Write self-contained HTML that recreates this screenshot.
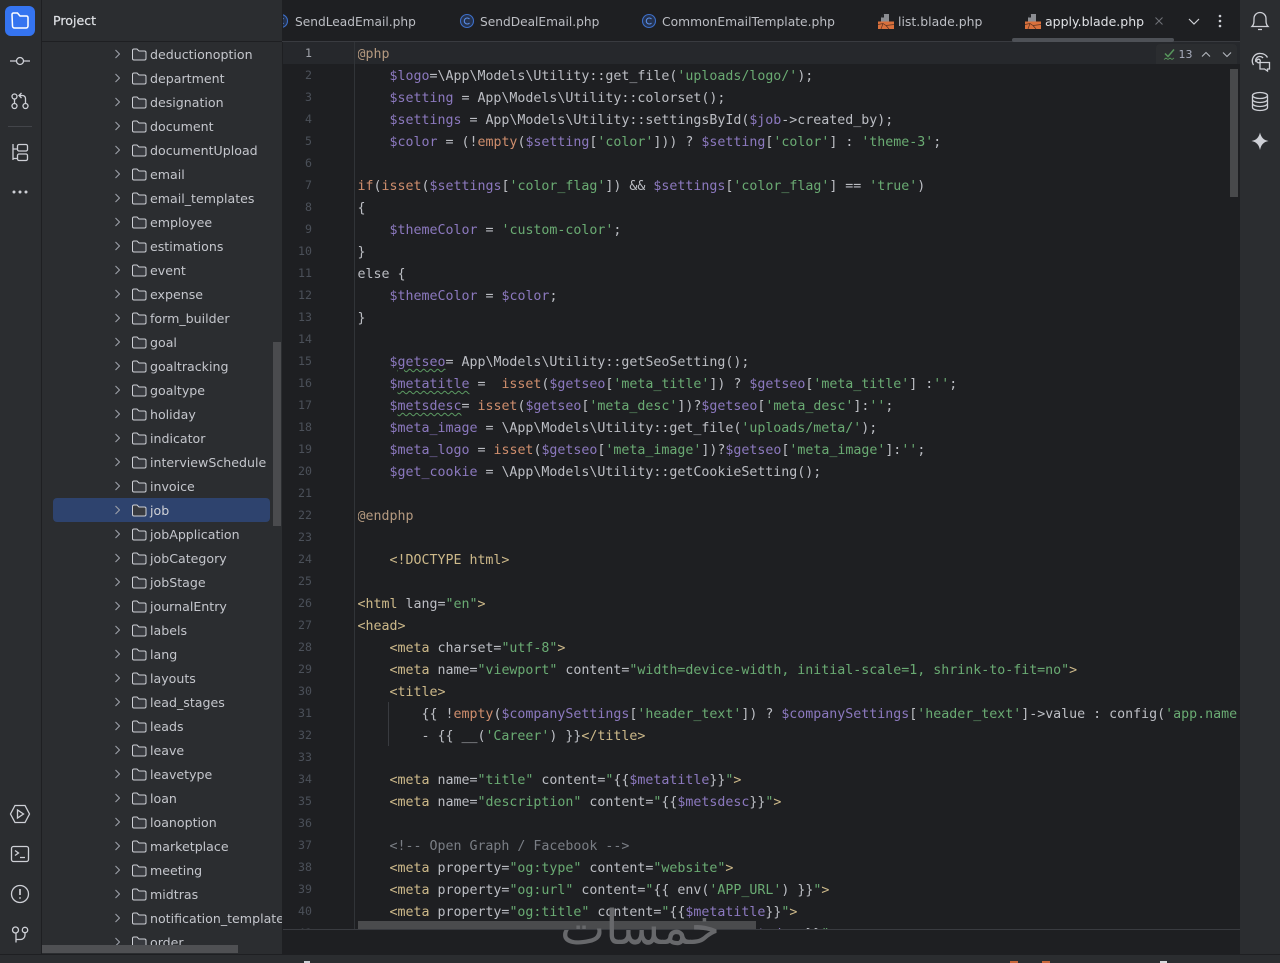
<!DOCTYPE html>
<html lang="en"><head><meta charset="utf-8"><title>apply.blade.php</title>
<style>
html,body{margin:0;padding:0;width:1280px;height:963px;overflow:hidden;background:#1e1f22}
*{box-sizing:border-box}
.a{position:absolute}
#rows{left:42px;top:42px;width:240px;height:912px;overflow:hidden;font:12.6px/26px "DejaVu Sans",sans-serif;color:#c4c6cc}
.r{height:24px;padding-left:108px;position:relative;white-space:nowrap}
.r svg{position:absolute;left:70px;top:0}
.sel{background:#2e436e;border-radius:4px;margin:0 12px 0 11px;padding-left:97px;color:#cfd1d6}
.sel svg{left:59px}
#code{left:357.5px;top:44px;width:880px;height:885px;overflow:hidden;font:13.29px/22px "DejaVu Sans Mono",monospace;color:#bcbec4;white-space:pre}
#nums{left:283px;top:42px;width:29px;height:887px;overflow:hidden;font:11.6px/22px "DejaVu Sans Mono",monospace;color:#4b5059;text-align:right}
#nums b{font-weight:normal;color:#a1a3ab}
.v{color:#8c79bf}.s{color:#6aab73}.k{color:#cf8e6d}.t{color:#cdb98a}.c{color:#7a7e85}.p{color:#b59a80}
.w{text-decoration:underline wavy #5c9a62 1px;text-underline-offset:2px}
.tab{top:0;height:42px;font:12.2px/44px "DejaVu Sans",sans-serif;color:#bcbec4;white-space:nowrap}
</style></head><body>
<svg width="0" height="0" style="position:absolute"><defs>
<symbol id="f" viewBox="0 0 16 24"><path transform="translate(-1 0)" d="M1.5 8.500a1.500 1.500 0 0 1 1.500-1.500h3l2 2h5.500a1.500 1.500 0 0 1 1.500 1.500v6a1.500 1.500 0 0 1-1.500 1.500h-10.500a1.500 1.500 0 0 1-1.500-1.500z" fill="#383a3f" stroke="#ced0d6" stroke-width="1"/></symbol>
<symbol id="ch" viewBox="0 0 8 24"><path transform="translate(1.500 0)" d="M2 8l4 4-4 4" fill="none" stroke="#9da0a8" stroke-width="1.100"/></symbol>
<symbol id="cl" viewBox="0 0 16 16"><circle cx="8" cy="8" r="6.500" fill="#25324d" stroke="#3d6fc9" stroke-width="1.100"/><path d="M10.500 6a3 3 0 1 0 0 4" fill="none" stroke="#5b8fe8" stroke-width="1.100"/></symbol>
<symbol id="bl" viewBox="0 0 16 16"><path d="M3 8V3.500L6 0h5v8z" fill="#8b8d92"/><path d="M3 3.500h3V0z" fill="#1e1f22"/><rect x="0" y="7.500" width="16" height="7.500" fill="#d9703c"/><path d="M0 10.500l5-1 3 2 8-1M5 9.500l-2 5.500M8 11.500l3 3.500" fill="none" stroke="#5a3220" stroke-width=".7"/></symbol>
</defs></svg>

<!-- left toolbar -->
<div class="a" style="left:0;top:0;width:41px;height:955px;background:#2b2d30"></div>
<div class="a" style="left:41px;top:0;width:1px;height:955px;background:#1e1f22"></div>
<div class="a" style="left:5px;top:6px;width:30px;height:30px;background:#3574f0;border-radius:6px"></div>
<svg class="a" style="left:0;top:0" width="41" height="955" fill="none" stroke="#ced0d6" stroke-width="1.300">
<path d="M12 14.500a1.500 1.500 0 0 1 1.500-1.500h4l2.500 3h6.500a1.500 1.500 0 0 1 1.500 1.500v8.500a2 2 0 0 1-2 2h-11.500a2 2 0 0 1-2-2z" stroke="#fff" stroke-width="1.500"/>
<circle cx="20" cy="61" r="3.500"/><path d="M10 61h6.500M23.500 61h6.500"/>
<circle cx="14.500" cy="96.500" r="2.500"/><circle cx="14.500" cy="106" r="2.500"/><circle cx="25.500" cy="106" r="2.500"/><path d="M14.500 99v4.500M25.500 103.500v-5a3 3 0 0 0-3-3h-3M21.500 93l-2.500 2.500 2.500 2.500"/>
<path d="M8 126.500h24" stroke="#43454a" stroke-width="1"/>
<path d="M13 144v16M13 149h4M13 158.500h4"/><rect x="17.500" y="144.500" width="10" height="6.500" rx="1.500"/><rect x="17.500" y="154" width="10" height="6.500" rx="1.500"/>
<g fill="#ced0d6" stroke="none"><circle cx="14" cy="192" r="1.500"/><circle cx="20" cy="192" r="1.500"/><circle cx="26" cy="192" r="1.500"/></g>
<path d="M15 805.500h10l4.500 8.500-4.500 8.500h-10l-4.500-8.500z"/><path d="M17.500 810v8l6-4z"/>
<rect x="11.500" y="846.500" width="17" height="15" rx="2"/><path d="M15 850.500l3.500 2.500-3.500 2.500M20 857.500h5"/>
<circle cx="20" cy="894" r="8.500"/><path d="M20 889v6" stroke-width="1.700"/><circle cx="20" cy="898" r=".9" fill="#ced0d6" stroke="none"/>
<circle cx="15.500" cy="930" r="3"/><circle cx="25" cy="930" r="2.700"/><path d="M16 933.500v9M16 939.500h4.500a4.500 4.500 0 0 0 4.500-4.500v-2"/>
</svg>

<!-- project panel -->
<div class="a" style="left:42px;top:0;width:240px;height:955px;background:#2b2d30"></div>
<div class="a" style="left:42px;top:41px;width:240px;height:1px;background:#1e1f22"></div>
<div class="a" style="left:53px;top:10px;font:12.6px/22px 'DejaVu Sans',sans-serif;color:#dfe1e5;-webkit-text-stroke:.2px #dfe1e5">Project</div>
<div class="a" id="rows">
<div class="r"><svg width="200" height="24"><use href="#ch" x="0" width="8" height="24"/><use href="#f" x="20" width="16" height="24"/></svg>deductionoption</div>
<div class="r"><svg width="200" height="24"><use href="#ch" x="0" width="8" height="24"/><use href="#f" x="20" width="16" height="24"/></svg>department</div>
<div class="r"><svg width="200" height="24"><use href="#ch" x="0" width="8" height="24"/><use href="#f" x="20" width="16" height="24"/></svg>designation</div>
<div class="r"><svg width="200" height="24"><use href="#ch" x="0" width="8" height="24"/><use href="#f" x="20" width="16" height="24"/></svg>document</div>
<div class="r"><svg width="200" height="24"><use href="#ch" x="0" width="8" height="24"/><use href="#f" x="20" width="16" height="24"/></svg>documentUpload</div>
<div class="r"><svg width="200" height="24"><use href="#ch" x="0" width="8" height="24"/><use href="#f" x="20" width="16" height="24"/></svg>email</div>
<div class="r"><svg width="200" height="24"><use href="#ch" x="0" width="8" height="24"/><use href="#f" x="20" width="16" height="24"/></svg>email_templates</div>
<div class="r"><svg width="200" height="24"><use href="#ch" x="0" width="8" height="24"/><use href="#f" x="20" width="16" height="24"/></svg>employee</div>
<div class="r"><svg width="200" height="24"><use href="#ch" x="0" width="8" height="24"/><use href="#f" x="20" width="16" height="24"/></svg>estimations</div>
<div class="r"><svg width="200" height="24"><use href="#ch" x="0" width="8" height="24"/><use href="#f" x="20" width="16" height="24"/></svg>event</div>
<div class="r"><svg width="200" height="24"><use href="#ch" x="0" width="8" height="24"/><use href="#f" x="20" width="16" height="24"/></svg>expense</div>
<div class="r"><svg width="200" height="24"><use href="#ch" x="0" width="8" height="24"/><use href="#f" x="20" width="16" height="24"/></svg>form_builder</div>
<div class="r"><svg width="200" height="24"><use href="#ch" x="0" width="8" height="24"/><use href="#f" x="20" width="16" height="24"/></svg>goal</div>
<div class="r"><svg width="200" height="24"><use href="#ch" x="0" width="8" height="24"/><use href="#f" x="20" width="16" height="24"/></svg>goaltracking</div>
<div class="r"><svg width="200" height="24"><use href="#ch" x="0" width="8" height="24"/><use href="#f" x="20" width="16" height="24"/></svg>goaltype</div>
<div class="r"><svg width="200" height="24"><use href="#ch" x="0" width="8" height="24"/><use href="#f" x="20" width="16" height="24"/></svg>holiday</div>
<div class="r"><svg width="200" height="24"><use href="#ch" x="0" width="8" height="24"/><use href="#f" x="20" width="16" height="24"/></svg>indicator</div>
<div class="r"><svg width="200" height="24"><use href="#ch" x="0" width="8" height="24"/><use href="#f" x="20" width="16" height="24"/></svg>interviewSchedule</div>
<div class="r"><svg width="200" height="24"><use href="#ch" x="0" width="8" height="24"/><use href="#f" x="20" width="16" height="24"/></svg>invoice</div>
<div class="r sel"><svg width="200" height="24"><use href="#ch" x="0" width="8" height="24"/><use href="#f" x="20" width="16" height="24"/></svg>job</div>
<div class="r"><svg width="200" height="24"><use href="#ch" x="0" width="8" height="24"/><use href="#f" x="20" width="16" height="24"/></svg>jobApplication</div>
<div class="r"><svg width="200" height="24"><use href="#ch" x="0" width="8" height="24"/><use href="#f" x="20" width="16" height="24"/></svg>jobCategory</div>
<div class="r"><svg width="200" height="24"><use href="#ch" x="0" width="8" height="24"/><use href="#f" x="20" width="16" height="24"/></svg>jobStage</div>
<div class="r"><svg width="200" height="24"><use href="#ch" x="0" width="8" height="24"/><use href="#f" x="20" width="16" height="24"/></svg>journalEntry</div>
<div class="r"><svg width="200" height="24"><use href="#ch" x="0" width="8" height="24"/><use href="#f" x="20" width="16" height="24"/></svg>labels</div>
<div class="r"><svg width="200" height="24"><use href="#ch" x="0" width="8" height="24"/><use href="#f" x="20" width="16" height="24"/></svg>lang</div>
<div class="r"><svg width="200" height="24"><use href="#ch" x="0" width="8" height="24"/><use href="#f" x="20" width="16" height="24"/></svg>layouts</div>
<div class="r"><svg width="200" height="24"><use href="#ch" x="0" width="8" height="24"/><use href="#f" x="20" width="16" height="24"/></svg>lead_stages</div>
<div class="r"><svg width="200" height="24"><use href="#ch" x="0" width="8" height="24"/><use href="#f" x="20" width="16" height="24"/></svg>leads</div>
<div class="r"><svg width="200" height="24"><use href="#ch" x="0" width="8" height="24"/><use href="#f" x="20" width="16" height="24"/></svg>leave</div>
<div class="r"><svg width="200" height="24"><use href="#ch" x="0" width="8" height="24"/><use href="#f" x="20" width="16" height="24"/></svg>leavetype</div>
<div class="r"><svg width="200" height="24"><use href="#ch" x="0" width="8" height="24"/><use href="#f" x="20" width="16" height="24"/></svg>loan</div>
<div class="r"><svg width="200" height="24"><use href="#ch" x="0" width="8" height="24"/><use href="#f" x="20" width="16" height="24"/></svg>loanoption</div>
<div class="r"><svg width="200" height="24"><use href="#ch" x="0" width="8" height="24"/><use href="#f" x="20" width="16" height="24"/></svg>marketplace</div>
<div class="r"><svg width="200" height="24"><use href="#ch" x="0" width="8" height="24"/><use href="#f" x="20" width="16" height="24"/></svg>meeting</div>
<div class="r"><svg width="200" height="24"><use href="#ch" x="0" width="8" height="24"/><use href="#f" x="20" width="16" height="24"/></svg>midtras</div>
<div class="r"><svg width="200" height="24"><use href="#ch" x="0" width="8" height="24"/><use href="#f" x="20" width="16" height="24"/></svg>notification_templates</div>
<div class="r"><svg width="200" height="24"><use href="#ch" x="0" width="8" height="24"/><use href="#f" x="20" width="16" height="24"/></svg>order</div>
</div>
<div class="a" style="left:273px;top:342px;width:8px;height:184px;background:#4a4b4e"></div>
<div class="a" style="left:42px;top:945px;width:196px;height:8px;background:#4f5053"></div>

<!-- tab bar -->
<div class="a" style="left:282px;top:41px;width:958px;height:1px;background:#393b40"></div>
<svg class="a" style="left:283px;top:13px" width="6" height="16"><use href="#cl" x="-10" width="16" height="16"/></svg>
<div class="a tab" style="left:295px">SendLeadEmail.php</div>
<svg class="a" style="left:459px;top:13px" width="16" height="16"><use href="#cl" width="16" height="16"/></svg>
<div class="a tab" style="left:480px">SendDealEmail.php</div>
<svg class="a" style="left:641px;top:13px" width="16" height="16"><use href="#cl" width="16" height="16"/></svg>
<div class="a tab" style="left:662px;font-size:12.3px">CommonEmailTemplate.php</div>
<svg class="a" style="left:878px;top:14px" width="16" height="16"><use href="#bl" width="16" height="16"/></svg>
<div class="a tab" style="left:898px;font-size:12.45px">list.blade.php</div>
<svg class="a" style="left:1025px;top:14px" width="16" height="16"><use href="#bl" width="16" height="16"/></svg>
<div class="a tab" style="left:1045px;color:#dfe1e5;font-size:12.5px">apply.blade.php</div>
<div class="a" style="left:1012px;top:38px;width:162px;height:4px;background:#4e5157;border-radius:2px"></div>
<svg class="a" style="left:1150px;top:10px" width="80" height="24" fill="none" stroke="#ced0d6" stroke-width="1.200">
<path d="M5.500 7.500l7 7M12.500 7.500l-7 7" stroke="#6f7278" stroke-width="1"/>
<path d="M39 9l5 5 5-5"/>
<g fill="#ced0d6" stroke="none"><circle cx="70" cy="6" r="1.300"/><circle cx="70" cy="11" r="1.300"/><circle cx="70" cy="16" r="1.300"/></g>
</svg>

<!-- editor -->
<div class="a" style="left:283px;top:42px;width:957px;height:22px;background:#26282c"></div>
<div class="a" style="left:354px;top:42px;width:1px;height:887px;background:#313438"></div>
<div class="a" style="left:388px;top:702px;width:1px;height:44px;background:#393b40"></div>
<div class="a" id="nums"><b>1</b><br>2<br>3<br>4<br>5<br>6<br>7<br>8<br>9<br>10<br>11<br>12<br>13<br>14<br>15<br>16<br>17<br>18<br>19<br>20<br>21<br>22<br>23<br>24<br>25<br>26<br>27<br>28<br>29<br>30<br>31<br>32<br>33<br>34<br>35<br>36<br>37<br>38<br>39<br>40<br>41</div>
<div class="a" id="code"><span class="p">@php</span>
    <span class="v">$logo</span>=\App\Models\Utility::get_file(<span class="s">'uploads/logo/'</span>);
    <span class="v">$setting</span> = App\Models\Utility::colorset();
    <span class="v">$settings</span> = App\Models\Utility::settingsById(<span class="v">$job</span>-&gt;created_by);
    <span class="v">$color</span> = (!<span class="k">empty</span>(<span class="v">$setting</span>[<span class="s">'color'</span>])) ? <span class="v">$setting</span>[<span class="s">'color'</span>] : <span class="s">'theme-3'</span>;

<span class="k">if</span>(<span class="k">isset</span>(<span class="v">$settings</span>[<span class="s">'color_flag'</span>]) &amp;&amp; <span class="v">$settings</span>[<span class="s">'color_flag'</span>] == <span class="s">'true'</span>)
{
    <span class="v">$themeColor</span> = <span class="s">'custom-color'</span>;
}
else {
    <span class="v">$themeColor</span> = <span class="v">$color</span>;
}

    <span class="v">$<span class="w">getseo</span></span>= App\Models\Utility::getSeoSetting();
    <span class="v">$<span class="w">metatitle</span></span> =  <span class="k">isset</span>(<span class="v">$getseo</span>[<span class="s">'meta_title'</span>]) ? <span class="v">$getseo</span>[<span class="s">'meta_title'</span>] :<span class="s">''</span>;
    <span class="v">$<span class="w">metsdesc</span></span>= <span class="k">isset</span>(<span class="v">$getseo</span>[<span class="s">'meta_desc'</span>])?<span class="v">$getseo</span>[<span class="s">'meta_desc'</span>]:<span class="s">''</span>;
    <span class="v">$meta_image</span> = \App\Models\Utility::get_file(<span class="s">'uploads/meta/'</span>);
    <span class="v">$meta_logo</span> = <span class="k">isset</span>(<span class="v">$getseo</span>[<span class="s">'meta_image'</span>])?<span class="v">$getseo</span>[<span class="s">'meta_image'</span>]:<span class="s">''</span>;
    <span class="v">$get_cookie</span> = \App\Models\Utility::getCookieSetting();

<span class="p">@endphp</span>

    <span class="t">&lt;!DOCTYPE html&gt;</span>

<span class="t">&lt;html</span> lang=<span class="s">"en"</span><span class="t">&gt;</span>
<span class="t">&lt;head&gt;</span>
    <span class="t">&lt;meta</span> charset=<span class="s">"utf-8"</span><span class="t">&gt;</span>
    <span class="t">&lt;meta</span> name=<span class="s">"viewport"</span> content=<span class="s">"width=device-width, initial-scale=1, shrink-to-fit=no"</span><span class="t">&gt;</span>
    <span class="t">&lt;title&gt;</span>
        {{ !<span class="k">empty</span>(<span class="v">$companySettings</span>[<span class="s">'header_text'</span>]) ? <span class="v">$companySettings</span>[<span class="s">'header_text'</span>]-&gt;value : config(<span class="s">'app.name'</span>) }}
        - {{ __(<span class="s">'Career'</span>) }}<span class="t">&lt;/title&gt;</span>

    <span class="t">&lt;meta</span> name=<span class="s">"title"</span> content=<span class="s">"</span>{{<span class="v">$metatitle</span>}}<span class="s">"</span><span class="t">&gt;</span>
    <span class="t">&lt;meta</span> name=<span class="s">"description"</span> content=<span class="s">"</span>{{<span class="v">$metsdesc</span>}}<span class="s">"</span><span class="t">&gt;</span>

    <span class="c">&lt;!-- Open Graph / Facebook --&gt;</span>
    <span class="t">&lt;meta</span> property=<span class="s">"og:type"</span> content=<span class="s">"website"</span><span class="t">&gt;</span>
    <span class="t">&lt;meta</span> property=<span class="s">"og:url"</span> content=<span class="s">"</span>{{ env(<span class="s">'APP_URL'</span>) }}<span class="s">"</span><span class="t">&gt;</span>
    <span class="t">&lt;meta</span> property=<span class="s">"og:title"</span> content=<span class="s">"</span>{{<span class="v">$metatitle</span>}}<span class="s">"</span><span class="t">&gt;</span>
    <span class="t">&lt;meta</span> property=<span class="s">"og:description"</span> content=<span class="s">"</span>{{<span class="v">$metsdesc</span>}}<span class="s">"</span><span class="t">&gt;</span></div>

<!-- inspection widget -->
<div class="a" style="left:1156px;top:44px;width:81px;height:20px;background:#2b2d30;border-radius:4px 4px 0 0"></div>
<svg class="a" style="left:1156px;top:44px" width="81" height="20" fill="none">
<path d="M9 9.500l3 3 6-7" stroke="#57965c" stroke-width="1.500"/><path d="M8 15.500l2-1.500 2 1.500 2-1.500 2 1.500 2-1.500" stroke="#57965c" stroke-width=".8"/>
<path d="M46 12.500l4-4 4 4M67 8.500l4 4 4-4" stroke="#b4b8bf" stroke-width="1.100"/></svg>
<div class="a" style="left:1178.5px;top:44px;font:11px/22px 'DejaVu Sans',sans-serif;color:#a8adbd">13</div>
<div class="a" style="left:1230px;top:69px;width:8px;height:128px;background:#48494b"></div>

<!-- bottom of editor -->
<div class="a" style="left:283px;top:929px;width:957px;height:1px;background:#393b40"></div>
<div class="a" style="left:283px;top:930px;width:957px;height:25px;background:#1e1f22"></div>
<div class="a" style="left:358px;top:921px;width:398px;height:8px;background:#4a4b4d"></div>

<!-- right toolbar -->
<div class="a" style="left:1240px;top:0;width:40px;height:954px;background:#2b2d30"></div>
<svg class="a" style="left:1240px;top:0" width="40" height="160" fill="none" stroke="#ced0d6" stroke-width="1.300">
<path d="M12 26.500c2-2 2-4 2-8a6 6 0 0 1 12 0c0 4 0 6 2 8zM18 29.500h4"/>
<path d="M13.500 65a7.500 7.500 0 0 1 7-11.500 8 8 0 0 1 7 4M16 62a4 4 0 0 1 4-5.500 4 4 0 0 1 3 1.500"/><circle cx="18.500" cy="61" r="1.800"/><path d="M20 62.500h9.500v6.500h-2v2l-3-2h-4.500z"/>
<ellipse cx="20" cy="95.500" rx="7.500" ry="3"/><path d="M12.500 95.500v12c0 1.700 3.400 3 7.500 3s7.500-1.300 7.500-3v-12M12.500 99.500c0 1.700 3.400 3 7.500 3s7.500-1.300 7.500-3M12.500 103.500c0 1.700 3.400 3 7.500 3s7.500-1.300 7.500-3"/>
<path d="M20 132.500c1.200 5 3.500 7.500 8.500 8.500-5 1-7.300 3.500-8.500 9-1.200-5.500-3.500-8-8.500-9 5-1 7.300-3.500 8.500-8.500z" fill="#ced0d6" stroke="none"/>
</svg>

<!-- status strip -->
<div class="a" style="left:0;top:955px;width:1280px;height:8px;background:#2b2d30"></div>
<div class="a" style="left:0;top:954px;width:1280px;height:1px;background:#1e1f22"></div>
<div class="a" style="left:304px;top:961px;width:6px;height:2px;background:#ced0d6"></div>
<div class="a" style="left:1010px;top:961px;width:8px;height:2px;background:#c9663a"></div>
<div class="a" style="left:1042px;top:961px;width:8px;height:2px;background:#c9663a"></div>
<div class="a" style="left:1160px;top:961px;width:7px;height:2px;background:#d8d9dc"></div>

<!-- watermark -->
<div class="a" dir="rtl" style="left:540px;top:898px;width:200px;text-align:center;font:48px/60px 'DejaVu Sans',sans-serif;color:#67686b">خمسات</div>
</body></html>
